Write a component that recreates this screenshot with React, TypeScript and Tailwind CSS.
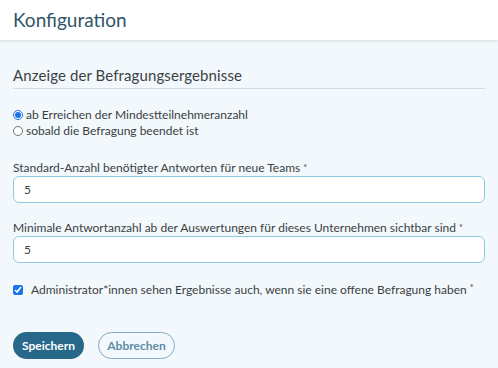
import React from "react";

export default function App() {
  const font = { fontFamily: 'Lato, "Noto Sans", sans-serif' };
  return (
    <div className="w-[498px] h-[368px] bg-[#f2f8fb] text-[#3a3f44] overflow-hidden" style={font}>
      <header className="h-[40px] bg-white flex items-center px-[13px] shadow-[0_1px_3px_rgba(0,0,0,0.12)] relative">
        <h1 className="text-[19px] text-[#2f5568]">Konfiguration</h1>
      </header>
      <main className="px-[13px] pt-[25px]">
        <h2 className="text-[15px] leading-[20px] text-[#3c4146] tracking-[0.1px] pb-[3px] border-b border-[#d6dde2]">Anzeige der Befragungsergebnisse</h2>
        <div className="mt-[18px] flex flex-col text-[12px]">
          <label className="flex items-center gap-[3px] h-[16px]">
            <input type="radio" name="r" defaultChecked className="w-[10px] h-[10px] m-0 accent-[#1a73e8]" />
            <span>ab Erreichen der Mindestteilnehmeranzahl</span>
          </label>
          <label className="flex items-center gap-[3px] h-[16px]">
            <input type="radio" name="r" className="w-[10px] h-[10px] m-0" />
            <span>sobald die Befragung beendet ist</span>
          </label>
        </div>
        <div className="mt-[21px]">
          <div className="text-[12px] leading-[16px]">Standard-Anzahl benötigter Antworten für neue Teams <span className="text-[9px] align-top">*</span></div>
          <input defaultValue="5" className="block w-full h-[27px] bg-white border-[1.5px] border-[#8ccbe0] rounded-[6px] px-[10px] text-[12px] outline-none" />
        </div>
        <div className="mt-[17px]">
          <div className="text-[12px] leading-[16px]">Minimale Antwortanzahl ab der Auswertungen für dieses Unternehmen sichtbar sind <span className="text-[9px] align-top">*</span></div>
          <input defaultValue="5" className="block w-full h-[27px] bg-white border-[1.5px] border-[#8ccbe0] rounded-[6px] px-[10px] text-[12px] outline-none" />
        </div>
        <label className="mt-[19px] flex items-center gap-[8px] h-[16px] text-[12px]">
          <input type="checkbox" defaultChecked className="w-[10px] h-[10px] m-0 accent-[#1a73e8]" />
          <span>Administrator*innen sehen Ergebnisse auch, wenn sie eine offene Befragung haben <span className="text-[9px] align-top">*</span></span>
        </label>
        <div className="mt-[34px] flex gap-[14px]">
          <button className="h-[27px] w-[71px] rounded-full bg-[#27688a] text-white text-[12px] font-bold">Speichern</button>
          <button className="h-[27px] w-[77px] rounded-full border border-[#7fa9c4] text-[#5f8daa] text-[12px] font-bold bg-transparent">Abbrechen</button>
        </div>
      </main>
    </div>
  );
}
